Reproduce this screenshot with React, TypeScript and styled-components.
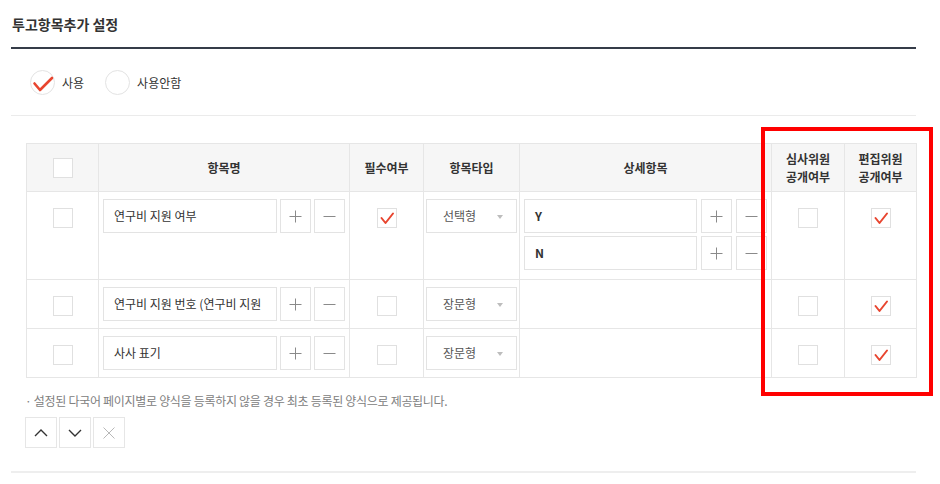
import React from 'react';
import styled, { createGlobalStyle } from 'styled-components';

const GlobalStyle = createGlobalStyle`
  html, body { margin: 0; padding: 0; background: #fff; }
  body { font-family: "Noto Sans CJK KR", "Noto Sans", sans-serif; color: #333; }
  * { box-sizing: border-box; }
`;

const Page = styled.div`
  width: 940px;
  height: 484px;
  padding: 0 24px 0 11px;
  overflow: hidden;
`;

const Title = styled.h2`
  margin: 0;
  height: 49px;
  padding: 14px 0 0 1px;
  font-size: 14px;
  font-weight: 700;
  line-height: 20px;
  color: #333;
  border-bottom: 2px solid #353c48;
`;

const RadioRow = styled.div`
  height: 67px;
  display: flex;
  align-items: center;
  padding-left: 19px;
  gap: 21px;
  border-bottom: 1px solid #ebebeb;
`;

const RadioLabel = styled.label`
  display: flex;
  align-items: center;
  gap: 7px;
  font-size: 12px;
  color: #333;
`;

const RadioCircle = styled.span`
  position: relative;
  width: 25px;
  height: 25px;
  border-radius: 50%;
  border: 1px solid #e3e3e3;
  background: #fff;
  display: flex;
  align-items: center;
  justify-content: center;
`;

const TableArea = styled.div`
  position: relative;
  margin-top: 27px;
  padding-left: 15px;
`;

const Grid = styled.table`
  width: 890px;
  border-collapse: collapse;
  table-layout: fixed;
  border: 1px solid #e6e6e6;
`;

const Col = styled.col<{ $w: number }>`
  width: ${p => p.$w}px;
`;

const HeadCell = styled.th`
  height: 48px;
  padding: 0;
  background: #f6f6f6;
  border: 1px solid #e6e6e6;
  font-size: 12px;
  font-weight: 700;
  line-height: 18px;
  color: #333;
  text-align: center;
  vertical-align: middle;
`;

const Cell = styled.td<{ $pt?: number; $pb?: number; $center?: boolean; $px?: number }>`
  border: 1px solid #e6e6e6;
  vertical-align: top;
  padding: ${p => p.$pt ?? 7}px ${p => p.$px ?? 4}px ${p => p.$pb ?? 7}px;
  text-align: ${p => (p.$center ? 'center' : 'left')};
`;

const BodyRow = styled.tr<{ $h: number }>`
  height: ${p => p.$h}px;
`;

const Box = styled.span`
  display: inline-flex;
  width: 20px;
  height: 20px;
  border: 1px solid #e0e0e0;
  background: #fff;
  align-items: center;
  justify-content: center;
  vertical-align: top;
`;

const InputLine = styled.div<{ $gap: number }>`
  display: flex;
  gap: ${p => p.$gap}px;
  align-items: stretch;
`;

const Stack = styled.div`
  display: flex;
  flex-direction: column;
  gap: 3px;
`;

const Field = styled.div<{ $w?: number; $bold?: boolean }>`
  ${p => (p.$w ? `width: ${p.$w}px; flex: none;` : 'flex: 1;')}
  height: 34px;
  border: 1px solid #e3e3e3;
  background: #fff;
  padding: 0 10px;
  font-size: 12px;
  font-weight: ${p => (p.$bold ? 700 : 400)};
  line-height: 32px;
  color: #333;
  white-space: nowrap;
  overflow: hidden;
`;

const SquareBtn = styled.button`
  width: 31px;
  height: 34px;
  flex: none;
  padding: 0;
  border: 1px solid #e3e3e3;
  background: #fff;
  display: flex;
  align-items: center;
  justify-content: center;
`;

const Select = styled.div`
  position: relative;
  height: 34px;
  border: 1px solid #e3e3e3;
  background: #fff;
  padding-left: 16px;
  font-size: 12px;
  line-height: 32px;
  color: #555;
`;

const Caret = styled.span`
  position: absolute;
  right: 13px;
  top: 15px;
  width: 0;
  height: 0;
  border-left: 3px solid transparent;
  border-right: 3px solid transparent;
  border-top: 4px solid #bdbdbd;
`;

const Highlight = styled.div`
  position: absolute;
  left: 750px;
  top: -16px;
  width: 172px;
  height: 269px;
  border: 4px solid #ff0000;
  pointer-events: none;
`;

const Note = styled.p`
  margin: 15px 0 0;
  padding-left: 14px;
  font-size: 12px;
  line-height: 16px;
  letter-spacing: -0.3px;
  color: #808080;
`;

const MoveBar = styled.div`
  display: flex;
  gap: 2px;
  margin-top: 8px;
  padding-left: 14px;
`;

const MoveBtn = styled.button`
  width: 32px;
  height: 31px;
  padding: 0;
  border: 1px solid #e6e6e6;
  background: #fff;
  display: flex;
  align-items: center;
  justify-content: center;
`;

const BottomLine = styled.div`
  margin-top: 23px;
  border-top: 2px solid #eeeeee;
`;

const RadioCheck = () => (
  <svg width="25" height="25" viewBox="0 0 25 25" style={{ position: 'absolute', left: -1, top: -1 }}>
    <path d="M4.5 13.5 L10 20 L22 8" fill="none" stroke="#e8452f" strokeWidth="2.6" strokeLinecap="round" strokeLinejoin="round" />
  </svg>
);

const BoxCheck = () => (
  <svg width="18" height="18" viewBox="0 0 18 18">
    <path d="M3.5 9 L7.5 14 L15 4.5" fill="none" stroke="#e8452f" strokeWidth="2" strokeLinecap="round" strokeLinejoin="round" />
  </svg>
);

const PlusIcon = () => (
  <svg width="13" height="13" viewBox="0 0 13 13">
    <path d="M6.5 0.5 V12.5 M0.5 6.5 H12.5" stroke="#8a8a8a" strokeWidth="1" />
  </svg>
);

const MinusIcon = () => (
  <svg width="13" height="13" viewBox="0 0 13 13">
    <path d="M0.5 6.5 H12.5" stroke="#8a8a8a" strokeWidth="1" />
  </svg>
);

const UpIcon = () => (
  <svg width="14" height="8" viewBox="0 0 14 8">
    <path d="M1 7 L7 1 L13 7" fill="none" stroke="#333" strokeWidth="1.4" />
  </svg>
);

const DownIcon = () => (
  <svg width="14" height="8" viewBox="0 0 14 8">
    <path d="M1 1 L7 7 L13 1" fill="none" stroke="#333" strokeWidth="1.4" />
  </svg>
);

const CloseIcon = () => (
  <svg width="12" height="12" viewBox="0 0 12 12">
    <path d="M0.5 0.5 L11.5 11.5 M11.5 0.5 L0.5 11.5" fill="none" stroke="#b8b8b8" strokeWidth="1" />
  </svg>
);

const Check = ({ on }: { on?: boolean }) => <Box>{on ? <BoxCheck /> : null}</Box>;

const PlusMinus = () => (
  <>
    <SquareBtn><PlusIcon /></SquareBtn>
    <SquareBtn><MinusIcon /></SquareBtn>
  </>
);

type Row = {
  name: string;
  required: boolean;
  type: string;
  details: string[];
  reviewer: boolean;
  editor: boolean;
  h: number;
};

const rows: Row[] = [
  { name: '연구비 지원 여부', required: true, type: '선택형', details: ['Y', 'N'], reviewer: false, editor: true, h: 88 },
  { name: '연구비 지원 번호 (연구비 지원', required: false, type: '장문형', details: [], reviewer: false, editor: true, h: 49 },
  { name: '사사 표기', required: false, type: '장문형', details: [], reviewer: false, editor: true, h: 49 },
];

export default function App() {
  return (
    <>
      <GlobalStyle />
      <Page>
        <Title>투고항목추가 설정</Title>
        <RadioRow>
          <RadioLabel>
            <RadioCircle><RadioCheck /></RadioCircle>
            사용
          </RadioLabel>
          <RadioLabel>
            <RadioCircle />
            사용안함
          </RadioLabel>
        </RadioRow>

        <TableArea>
          <Grid>
            <colgroup>
              <Col $w={72} />
              <Col $w={251} />
              <Col $w={74} />
              <Col $w={96} />
              <Col $w={252} />
              <Col $w={73} />
              <Col $w={72} />
            </colgroup>
            <thead>
              <tr>
                <HeadCell><Check /></HeadCell>
                <HeadCell>항목명</HeadCell>
                <HeadCell>필수여부</HeadCell>
                <HeadCell>항목타입</HeadCell>
                <HeadCell>상세항목</HeadCell>
                <HeadCell>심사위원<br />공개여부</HeadCell>
                <HeadCell>편집위원<br />공개여부</HeadCell>
              </tr>
            </thead>
            <tbody>
              {rows.map((r, i) => (
                <BodyRow key={i} $h={r.h}>
                  <Cell $center $pt={16}><Check /></Cell>
                  <Cell>
                    <InputLine $gap={3}>
                      <Field $w={174}>{r.name}</Field>
                      <PlusMinus />
                    </InputLine>
                  </Cell>
                  <Cell $center $pt={16}><Check on={r.required} /></Cell>
                  <Cell $px={2}>
                    <Select>{r.type}<Caret /></Select>
                  </Cell>
                  <Cell $pb={r.details.length ? 9 : 7}>
                    {r.details.length > 0 && (
                      <Stack>
                        {r.details.map(d => (
                          <InputLine $gap={4} key={d}>
                            <Field $bold>{d}</Field>
                            <PlusMinus />
                          </InputLine>
                        ))}
                      </Stack>
                    )}
                  </Cell>
                  <Cell $center $pt={16}><Check on={r.reviewer} /></Cell>
                  <Cell $center $pt={16}><Check on={r.editor} /></Cell>
                </BodyRow>
              ))}
            </tbody>
          </Grid>
          <Highlight />
        </TableArea>

        <Note>· 설정된 다국어 페이지별로 양식을 등록하지 않을 경우 최초 등록된 양식으로 제공됩니다.</Note>
        <MoveBar>
          <MoveBtn><UpIcon /></MoveBtn>
          <MoveBtn><DownIcon /></MoveBtn>
          <MoveBtn><CloseIcon /></MoveBtn>
        </MoveBar>
        <BottomLine />
      </Page>
    </>
  );
}
